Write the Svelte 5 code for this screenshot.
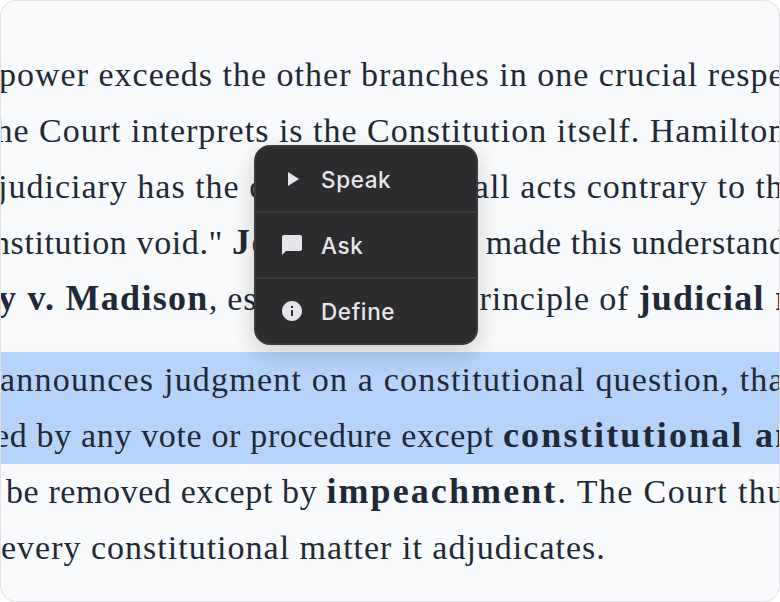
<script>
  // each row is clipped by the panel, shift says how far it starts left of the edge
  // ls and bls are the letter spacing of the regular and the bold runs
  const first = [
    { shift: -2, ls: 1, parts: [['power exceeds the other branches in one crucial respect']] },
    { shift: -16, ls: 1, parts: [['the Court interprets is the Constitution itself. Hamilton']] },
    { shift: -3, ls: 1, parts: [['judiciary has the capacity to bar all acts contrary to the']] },
    { shift: -8, ls: 0.6, bls: 1.5, parts: [['nstitution void." '], ['John Marshall', true], [' made this understanding']] },
    { shift: -3, ls: 0.8, bls: 1.3, parts: [['y v. Madison', true], [', establishing the principle of '], ['judicial review', true]] }
  ];
  const second = [
    { shift: -1, ls: 1.2, mark: true, parts: [['announces judgment on a constitutional question, that']] },
    { shift: -7, ls: 0.65, bls: 2.2, mark: true, parts: [['ed by any vote or procedure except '], ['constitutional amendment', true]] },
    { shift: 5, ls: 0.6, bls: 2.1, parts: [['be removed except by '], ['impeachment', true], ['. The Court thus', false, 1.4]] },
    { shift: 0, ls: 1, parts: [['every constitutional matter it adjudicates.']] }
  ];
</script>

{#snippet para(rows)}
  <div class="para">
    {#each rows as row}
      <div class="row" class:mark={row.mark}>
        <span class="line" style="margin-left:{row.shift}px;--ls:{row.ls}px;--bls:{row.bls ?? 2}px">{#each row.parts as p}{#if p[1]}<b>{p[0]}</b>{:else if p[2]}<span style="letter-spacing:{p[2]}px">{p[0]}</span>{:else}{p[0]}{/if}{/each}</span>
      </div>
    {/each}
  </div>
{/snippet}

<main class="panel">
  {@render para(first)}
  {@render para(second)}

  <div class="menu">
    <div class="item">
      <svg viewBox="0 0 24 24" width="24" height="24"><path d="M8 5v14l11-7z" fill="currentColor"/></svg>
      <span>Speak</span>
    </div>
    <div class="item">
      <svg viewBox="0 0 24 24" width="24" height="24"><path d="M20 2H4c-1.100 0-2 .9-2 2v18l4-4h14c1.100 0 2-.9 2-2V4c0-1.100-.9-2-2-2z" fill="currentColor"/></svg>
      <span>Ask</span>
    </div>
    <div class="item">
      <svg viewBox="0 0 24 24" width="24" height="24"><path d="M12 2C6.480 2 2 6.480 2 12s4.480 10 10 10 10-4.480 10-10S17.520 2 12 2zm1 15h-2v-6h2v6zm0-8h-2V7h2v2z" fill="currentColor"/></svg>
      <span>Define</span>
    </div>
  </div>
</main>

<style>
  :global(body) { margin: 0; background: #fff; }
  .panel {
    position: relative;
    box-sizing: border-box;
    width: 780px;
    height: 602px;
    padding-top: 46px;
    overflow: hidden;
    background: #f9fafc;
    border: 1px solid #e2e2e6;
    border-radius: 16px;
    color: #1f2937;
    font-family: "Liberation Serif", serif;
    font-size: 34px;
  }
  .para + .para { margin-top: 25px; }
  .row { height: 56px; line-height: 56px; white-space: nowrap; overflow: hidden; }
  .line { display: inline-block; letter-spacing: var(--ls); }
  .row b { font-size: 36px; line-height: 0; letter-spacing: var(--bls); }
  .mark { background: #b6d4f9; }
  .menu {
    position: absolute;
    left: 253px;
    top: 144px;
    box-sizing: border-box;
    width: 224px;
    height: 200px;
    background: #2c2c2e;
    border: 2px solid #3a3a3c;
    border-radius: 16px;
    box-shadow: 0 8px 24px rgba(0, 0, 0, 0.18);
    color: #e5e5ea;
    font-family: Inter, sans-serif;
    font-size: 22.5px;
    font-weight: 500;
    letter-spacing: 0.6px;
    display: flex;
    flex-direction: column;
  }
  .item { flex: 1; display: flex; align-items: center; gap: 17px; padding-left: 24px; }
  .item + .item { border-top: 2px solid #3a3a3c; }
  .item svg { flex: none; }
</style>
